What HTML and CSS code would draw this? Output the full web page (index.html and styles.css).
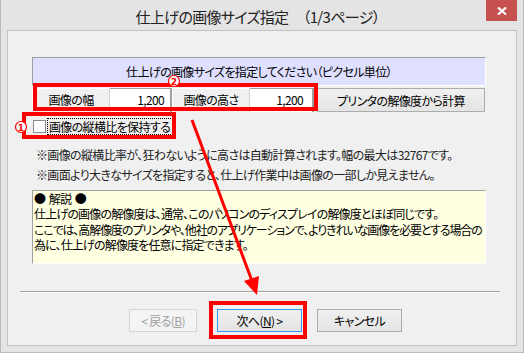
FILE: index.html
```html
<!DOCTYPE html>
<html lang="ja">

<head>
    <meta charset="UTF-8">
    <title>仕上げの画像サイズ指定</title>
    <link rel="stylesheet" href="styles.css">
</head>

<body>
    <div class="window">
        <div class="titlebar">
            <div class="title">仕上げの画像サイズ指定　（1/3ページ）</div>
            <div class="close">
                <svg width="10" height="8" viewBox="0 0 10 8">
                    <path d="M1 0.5 L9 7.5 M9 0.5 L1 7.5" stroke="#fff" stroke-width="2.2" />
                </svg>
            </div>
        </div>

        <div class="client">
            <div class="panel">
                <div class="caption">仕上げの画像サイズを指定してください（ピクセル単位）</div>

                <div class="size-row">
                    <div class="cell label">画像の幅</div>
                    <div class="cell value">1,200</div>
                    <div class="cell label">画像の高さ</div>
                    <div class="cell value wide">1,200</div>
                    <button class="btn calc">プリンタの解像度から計算</button>
                </div>

                <div class="keep">
                    <span class="check"></span>
                    <span class="focus">画像の縦横比を保持する</span>
                </div>

                <div class="notes">
                    <p>※画像の縦横比率が、狂わないように高さは自動計算されます。幅の最大は32767です。</p>
                    <p>※画面より大きなサイズを指定すると、仕上げ作業中は画像の一部しか見えません。</p>
                </div>

                <div class="explain">
                    <p>●&nbsp; 解説&nbsp; ●</p>
                    <p>仕上げの画像の解像度は、通常、このパソコンのディスプレイの解像度とほぼ同じです。</p>
                    <p class="tight">ここでは、高解像度のプリンタや、他社のアプリケーションで、よりきれいな画像を必要とする場合の</p>
                    <p>為に、仕上げの解像度を任意に指定できます。</p>
                </div>
            </div>

            <div class="separator"></div>

            <div class="buttons">
                <button class="btn back" disabled>&lt; 戻る(<u>B</u>)</button>
                <button class="btn next">次へ(<u>N</u>) &gt;</button>
                <button class="btn cancel">キャンセル</button>
            </div>
        </div>
    </div>

    <!-- 注釈（赤枠と矢印） -->
    <svg class="marks" width="524" height="353" viewBox="0 0 524 353">
        <g fill="none" stroke="#f00" stroke-width="4">
            <rect x="35" y="85" width="281" height="24" />
            <rect x="24" y="114" width="150" height="23" />
            <rect x="211" y="303" width="94" height="34" />
        </g>
        <line x1="192" y1="120" x2="252" y2="281" stroke="#f00" stroke-width="3" />
        <polygon points="257,295 244,281 259,276" fill="#f00" />
        <circle cx="21" cy="127" r="5.5" fill="#fff" stroke="#f00" stroke-width="1.2" />
        <text x="21" y="130.5" class="num">1</text>
        <circle cx="174" cy="81" r="5.5" fill="#fff" stroke="#f00" stroke-width="1.2" />
        <text x="174" y="84.5" class="num">2</text>
    </svg>
</body>

</html>
```

FILE: styles.css
```css
body {
    margin: 0;
    position: relative;
    font-family: "Noto Sans CJK JP", sans-serif;
    font-size: 12px;
    font-feature-settings: "palt" 1;
    letter-spacing: -0.65px;
    color: #000;
}

p {
    margin: 0;
}

.window {
    width: 524px;
    height: 353px;
    box-sizing: border-box;
    background-color: #e4e4e4;
    border: 1px solid #b9b9b9;
    border-top: none;
    padding: 0 6px 6px 6px;
    display: flex;
    flex-direction: column;
}

.titlebar {
    height: 30px;
    display: flex;
    flex-shrink: 0;
}

.title {
    flex: 1;
    padding-left: 22px;
    padding-top: 2px;
    line-height: 30px;
    text-align: center;
    font-size: 15px;
    color: #222;
}

.close {
    width: 31px;
    height: 21px;
    background-color: #c75050;
    display: flex;
    align-items: center;
    justify-content: center;
}

.client {
    flex: 1;
    background-color: #f0f0f0;
    border: 1px solid #c2c2c2;
}

.panel {
    width: 454px;
    margin: 26px 0 0 24px;
}

.caption {
    height: 29px;
    box-sizing: border-box;
    background-color: #dfdfff;
    border-top: 1px solid #a0a0a0;
    border-left: 1px solid #a0a0a0;
    border-right: 1px solid #fff;
    border-bottom: 1px solid #fff;
    line-height: 27px;
    text-align: center;
}

.size-row {
    display: flex;
    margin-top: 2px;
    height: 24px;
}

.cell {
    box-sizing: border-box;
    line-height: 22px;
    border-top: 1px solid #fff;
}

.cell.label {
    width: 78px;
    text-align: center;
    border-left: 1px solid #fff;
    border-right: 1px solid #d4d4d4;
}

.cell.value {
    width: 62px;
    background-color: #fff;
    text-align: right;
    padding-right: 6px;
    border-top: 1px solid #a0a0a0;
    border-right: 2px solid #a0a0a0;
}

.cell.value.wide {
    width: 64px;
    padding-right: 9px;
}

.btn {
    font-family: inherit;
    font-size: 12px;
    font-feature-settings: "palt" 1;
    letter-spacing: -0.65px;
    color: #000;
    height: 23px;
    padding: 0;
    background: linear-gradient(#f0f0f0, #e4e4e4);
    border: 1px solid #acacac;
    border-radius: 0;
}

.btn.calc {
    width: 168px;
    height: 24px;
    margin-left: 3px;
}

.keep {
    height: 28px;
    display: flex;
    align-items: center;
    padding-left: 1px;
}

.check {
    width: 13px;
    height: 13px;
    box-sizing: border-box;
    background-color: #fff;
    border: 1px solid #8a8a8a;
    margin-right: 1px;
    margin-top: 1px;
}

.focus {
    height: 17px;
    box-sizing: border-box;
    line-height: 15px;
    padding: 0 2px 0 1px;
    border: 1px dotted #000;
    margin-top: 1px;
}

.notes {
    margin-top: 5px;
    padding-left: 4px;
    line-height: 20px;
    color: #222;
    white-space: nowrap;
}

.explain {
    margin-top: 5px;
    height: 74px;
    box-sizing: border-box;
    background-color: #ffffe1;
    border-top: 1px solid #a0a0a0;
    border-left: 1px solid #a0a0a0;
    border-right: 1px solid #fff;
    border-bottom: 1px solid #fff;
    padding-left: 1px;
    line-height: 15.3px;
    letter-spacing: -0.85px;
    white-space: nowrap;
    overflow: hidden;
}

.explain .tight {
    letter-spacing: -1.1px;
}

.separator {
    width: 480px;
    margin: 27px 0 0 12px;
    border-top: 1px solid #a0a0a0;
    border-bottom: 1px solid #fff;
}

.buttons {
    display: flex;
    margin: 16px 0 0 121px;
}

.btn.back {
    width: 68px;
    color: #a0a0a0;
    background: #f4f4f4;
    border-color: #d5d5d5;
}

.btn.next {
    width: 85px;
    margin-left: 20px;
    border-color: #3399ff;
}

.btn.next u {
    color: #000;
}

.btn.cancel {
    width: 85px;
    margin-left: 15px;
}

.marks {
    position: absolute;
    top: 0;
    left: 0;
    pointer-events: none;
}

.num {
    font-family: "DejaVu Sans", sans-serif;
    font-size: 9px;
    font-weight: bold;
    letter-spacing: 0;
    fill: #f00;
    text-anchor: middle;
}
```
